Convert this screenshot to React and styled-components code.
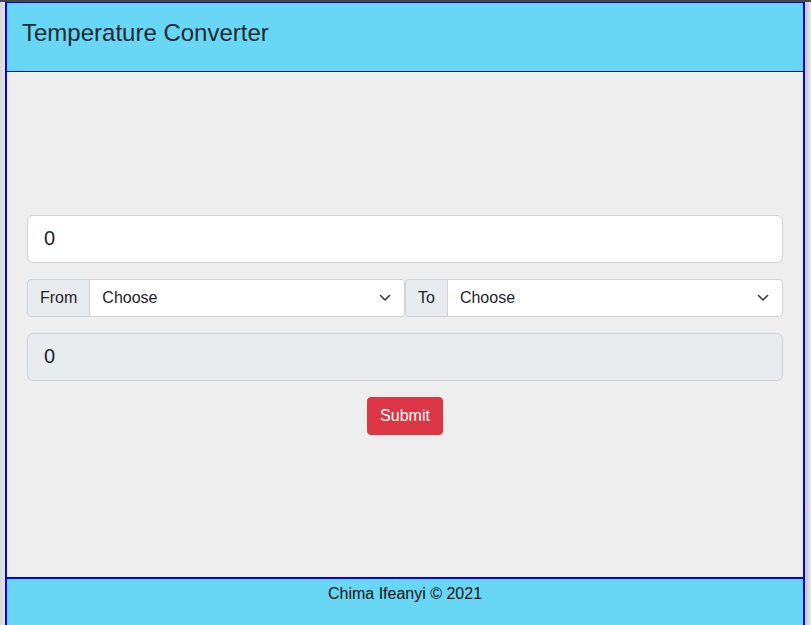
import React, { useState } from "react";
import styled, { createGlobalStyle } from "styled-components";

const GlobalStyle = createGlobalStyle`
  html, body {
    margin: 0;
    padding: 0;
    overflow: hidden;
  }
  body {
    background: linear-gradient(to right, #d6d6d6 0, #e4e4e4 5px, #e4e4e4 805px, #c8c8c8 806px, #e8e8e8 811px);
    border-top: 2px solid #474747;
    font-family: "Liberation Sans", Arial, sans-serif;
    color: #212529;
  }
  * { box-sizing: border-box; }
`;

const Frame = styled.div`
  margin-left: 5px;
  width: 800px;
  height: 623px;
  border: 2px solid #0000ee;
  border-top-width: 1px;
  border-bottom-width: 0;
  display: flex;
  flex-direction: column;
  background: #eeeeee;
`;

const Header = styled.header`
  height: 69px;
  flex-shrink: 0;
  background: #68d7f5;
  border-bottom: 1px solid #0a0a9a;
  display: flex;
  align-items: center;
  padding: 0 15px 8px;
`;

const Title = styled.h1`
  margin: 0;
  font-size: 24px;
  font-weight: 400;
  color: #1f2a30;
`;

const Main = styled.main`
  height: 505px;
  flex-shrink: 0;
  display: flex;
  flex-direction: column;
  justify-content: center;
  padding: 0 20px;
`;

const Field = styled.input`
  display: block;
  width: 100%;
  height: 48px;
  padding: 8px 16px;
  font-family: inherit;
  font-size: 20px;
  color: #212529;
  background: ${(p) => (p.readOnly ? "#e9ecef" : "#fff")};
  border: 1px solid #ced4da;
  border-radius: 6px;
  margin-bottom: 16px;
  outline: none;
`;

const Row = styled.div`
  display: flex;
  margin-bottom: 16px;
`;

const Group = styled.div`
  flex: 1;
  display: flex;
  height: 38px;
`;

const Addon = styled.span`
  display: flex;
  align-items: center;
  padding: 0 12px;
  font-size: 16px;
  color: #212529;
  background: #e9ecef;
  border: 1px solid #ced4da;
  border-radius: 4px 0 0 4px;
`;

const SelectWrap = styled.div`
  position: relative;
  flex: 1;
  margin-left: -1px;
`;

const Select = styled.select`
  width: 100%;
  height: 100%;
  appearance: none;
  padding: 0 36px 0 12px;
  font-family: inherit;
  font-size: 16px;
  color: #212529;
  background: #fff;
  border: 1px solid #ced4da;
  border-radius: 0 4px 4px 0;
  outline: none;
`;

const Chevron = styled.svg`
  position: absolute;
  right: 14px;
  top: 15px;
  width: 12px;
  height: 8px;
  pointer-events: none;
`;

const Actions = styled.div`
  display: flex;
  justify-content: center;
`;

const Button = styled.button`
  height: 38px;
  padding: 0 12px;
  font-family: inherit;
  font-size: 16px;
  color: #fff;
  background: #dc3545;
  border: 1px solid #dc3545;
  border-radius: 4px;
  cursor: pointer;
`;

const Footer = styled.footer`
  flex: 1;
  background: #68d7f5;
  border-top: 2px solid #0000ee;
  text-align: center;
  padding-top: 3px;
  font-size: 16px;
  line-height: 24px;
  color: #111;
`;

function Unit({ label }) {
  return (
    <Group>
      <Addon>{label}</Addon>
      <SelectWrap>
        <Select defaultValue="">
          <option value="">Choose</option>
          <option value="c">Celsius</option>
          <option value="f">Fahrenheit</option>
          <option value="k">Kelvin</option>
        </Select>
        <Chevron viewBox="0 0 12 8">
          <path d="M1.5 1.5l4.5 4.5 4.5-4.5" fill="none" stroke="#343a40" strokeWidth="1.6" strokeLinecap="round" strokeLinejoin="round" />
        </Chevron>
      </SelectWrap>
    </Group>
  );
}

export default function App() {
  const [value, setValue] = useState("0");
  return (
    <>
      <GlobalStyle />
      <Frame>
        <Header>
          <Title>Temperature Converter</Title>
        </Header>
        <Main>
          <Field value={value} onChange={(e) => setValue(e.target.value)} />
          <Row>
            <Unit label="From" />
            <Unit label="To" />
          </Row>
          <Field readOnly value="0" />
          <Actions>
            <Button>Submit</Button>
          </Actions>
        </Main>
        <Footer>Chima Ifeanyi © 2021</Footer>
      </Frame>
    </>
  );
}
